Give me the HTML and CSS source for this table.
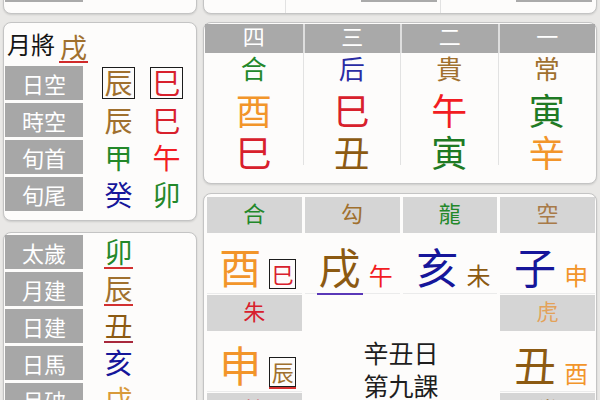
FILE: index.html
```html
<!DOCTYPE html>
<html lang="zh-Hant">
<head>
<meta charset="utf-8">
<title>六壬</title>
<link rel="stylesheet" href="styles.css">
</head>
<body>
<div class="page">
  <div class="col">
    <div class="card stub"><div class="stub-bar"></div></div>

    <div class="card kong">
      <div class="mj">
        <span class="mj-label">月將</span>
        <span class="mj-val brown">戌</span>
      </div>
      <div class="row"><div class="lbl">日空</div><div class="ch c1 box brown">辰</div><div class="ch c2 box red">巳</div></div>
      <div class="row"><div class="lbl">時空</div><div class="ch c1 brown">辰</div><div class="ch c2 red">巳</div></div>
      <div class="row"><div class="lbl">旬首</div><div class="ch c1 green">甲</div><div class="ch c2 bred">午</div></div>
      <div class="row"><div class="lbl">旬尾</div><div class="ch c1 navy">癸</div><div class="ch c2 green">卯</div></div>
    </div>

    <div class="card jian">
      <div class="row"><div class="lbl">太歲</div><div class="ch c1"><span class="green ul-red">卯</span></div></div>
      <div class="row"><div class="lbl">月建</div><div class="ch c1"><span class="brown ul-red">辰</span></div></div>
      <div class="row"><div class="lbl">日建</div><div class="ch c1"><span class="dbrown ul-dred">丑</span></div></div>
      <div class="row"><div class="lbl">日馬</div><div class="ch c1"><span class="navy">亥</span></div></div>
      <div class="row"><div class="lbl">月破</div><div class="ch c1"><span class="ochre">戌</span></div></div>
    </div>
  </div>

  <div class="col">
    <div class="card stub stub-right">
      <div class="seg"></div>
      <div class="seg"><div class="stub-bar"></div></div>
      <div class="seg"><div class="stub-bar"></div></div>
    </div>

    <div class="card ke">
      <div class="kcol">
        <div class="kh">四</div>
        <div class="kb"><div class="g green">合</div><div class="z z1 orange">酉</div><div class="z red">巳</div></div>
      </div>
      <div class="kcol">
        <div class="kh">三</div>
        <div class="kb"><div class="g blue">后</div><div class="z z1 red">巳</div><div class="z dbrown">丑</div></div>
      </div>
      <div class="kcol">
        <div class="kh">二</div>
        <div class="kb"><div class="g brown">貴</div><div class="z z1 bred">午</div><div class="z dgreen">寅</div></div>
      </div>
      <div class="kcol">
        <div class="kh">一</div>
        <div class="kb"><div class="g brown">常</div><div class="z z1 dgreen">寅</div><div class="z orange">辛</div></div>
      </div>
    </div>

    <div class="card pan">
      <div class="tile">
        <div class="th green">合</div>
        <div class="tb"><span class="big orange">酉</span><span class="sm sbox red">巳</span></div>
      </div>
      <div class="tile">
        <div class="th brown">勾</div>
        <div class="tb"><span class="big dbrown ul-purple">戌</span><span class="sm bred">午</span></div>
      </div>
      <div class="tile">
        <div class="th green">龍</div>
        <div class="tb"><span class="big navy">亥</span><span class="sm dbrown">未</span></div>
      </div>
      <div class="tile">
        <div class="th lbrown">空</div>
        <div class="tb"><span class="big navy">子</span><span class="sm orange">申</span></div>
      </div>

      <div class="tile">
        <div class="th red">朱</div>
        <div class="tb"><span class="big orange">申</span><span class="sm sbox brown sbox-ul">辰</span></div>
      </div>
      <div class="center">辛丑日<br>第九課</div>
      <div class="tile">
        <div class="th tan">虎</div>
        <div class="tb"><span class="big dbrown">丑</span><span class="sm orange">酉</span></div>
      </div>

      <div class="tile">
        <div class="th red">蛇</div>
        <div class="tb"><span class="big dbrown">未</span><span class="sm green">卯</span></div>
      </div>
      <div class="tile">
        <div class="th brown">常</div>
        <div class="tb"><span class="big dgreen">寅</span><span class="sm dbrown">戌</span></div>
      </div>
    </div>
  </div>
</div>
</body>
</html>
```

FILE: styles.css
```css
* {
  box-sizing: border-box;
  margin: 0;
  padding: 0;
}

html, body {
  width: 600px;
  height: 400px;
  overflow: hidden;
}

body {
  background: #e9e8e6;
  font-family: "Noto Sans CJK TC", "Noto Sans CJK JP", sans-serif;
  color: #111;
}

.page {
  display: grid;
  grid-template-columns: 194px 394px;
  column-gap: 6px;
  padding-left: 3px;
  margin-top: -20px;
}

.col {
  display: flex;
  flex-direction: column;
}

.card {
  background: #fdfcfb;
  border: 1px solid #c4c4c4;
  border-radius: 8px;
  box-shadow: 0 1px 2px rgba(0, 0, 0, 0.12);
}

/* colours */
.green { color: #23882a; }
.dgreen { color: #1f7a24; }
.blue { color: #2a2ca4; }
.navy { color: #16169a; }
.red { color: #d8202c; }
.bred { color: #f21c22; }
.orange { color: #f2952a; }
.brown { color: #a0702e; }
.lbrown { color: #a87a48; }
.dbrown { color: #8c5a12; }
.ochre { color: #d89a3a; }
.tan { color: #e3a25a; }

/* stubs at the top */
.stub {
  height: 34px;
  display: flex;
  align-items: flex-end;
  padding: 0 0 11px 1px;
}

.stub-bar {
  width: 78px;
  height: 20px;
  background: #aaaaaa;
}

.stub-right {
  display: grid;
  grid-template-columns: 80px 155px 1fr;
  padding: 0 1px 0 1px;
}

.stub-right .seg {
  height: 32px;
  display: flex;
  justify-content: flex-end;
  align-items: flex-end;
  padding: 0 3px 11px 0;
}

.stub-right .seg + .seg {
  border-left: 1px solid #e2e2e2;
}

.stub-right .stub-bar {
  width: 76px;
}

/* 空亡 card */
.kong {
  height: 199px;
  margin-top: 8px;
  padding-left: 1px;
}

.mj {
  height: 43px;
  display: flex;
  align-items: flex-end;
  padding: 0 0 3px 2px;
}

.mj-label {
  align-self: center;
  font-size: 24px;
  line-height: 28px;
  color: #151515;
  margin-top: 2px;
}

.mj-val {
  font-size: 27px;
  line-height: 28px;
  padding: 0 1px;
  margin-left: 4px;
  border-bottom: 2px solid #d02a2a;
}

.row {
  display: flex;
  align-items: center;
  height: 34px;
  margin-bottom: 3px;
}

.lbl {
  width: 78px;
  height: 34px;
  background: #a7a7a7;
  color: #fff;
  font-size: 22px;
  display: flex;
  align-items: center;
  justify-content: center;
}

.ch {
  width: 33px;
  height: 32px;
  font-size: 28px;
  line-height: 32px;
  text-align: center;
}

.c1 { margin-left: 19px; }
.c2 { margin-left: 15px; }

.box {
  border: 1.5px solid #1c1c1c;
  line-height: 29px;
}

/* 歲建 card */
.jian {
  height: 200px;
  margin-top: 11px;
  padding: 2px 0 0 1px;
}

.jian .ch {
  height: 34px;
  display: flex;
  justify-content: center;
}

.jian .ch span {
  width: 29px;
  line-height: 32px;
  text-align: center;
  border-bottom: 2px solid transparent;
}

.ul-red { border-bottom-color: #d23030 !important; }
.ul-dred { border-bottom-color: #a8283c !important; }

/* 四課 card */
.ke {
  height: 162px;
  margin-top: 8px;
  padding: 1px 1px 0 1px;
  display: grid;
  grid-template-columns: repeat(4, 1fr);
}

.kh {
  height: 29px;
  background: #a9a9a9;
  color: #fff;
  font-size: 22px;
  line-height: 22px;
  text-align: center;
}

.kcol + .kcol .kh {
  border-left: 2px solid #dedede;
}

.kb {
  height: 112px;
  text-align: center;
}

.kcol + .kcol .kb {
  border-left: 1px solid #e2e2e2;
}

.kb .g {
  font-size: 26px;
  line-height: 30px;
}

.kb .z {
  font-size: 36px;
  line-height: 42px;
}

.kb .z1 {
  margin-top: 5px;
}

/* 天地盤 card */
.pan {
  height: 260px;
  margin-top: 9px;
  padding: 3px 1px 0 3px;
  display: grid;
  grid-template-columns: repeat(4, 1fr);
  grid-auto-rows: auto;
  gap: 1px 3px;
  align-content: start;
}

.tile {
  display: flex;
  flex-direction: column;
}

.th {
  height: 36px;
  background: #d5d5d5;
  font-size: 22px;
  line-height: 30px;
  text-align: center;
}

.tb {
  height: 61px;
  display: flex;
  align-items: flex-end;
  justify-content: center;
  gap: 8px;
  padding: 0 0 4px 7px;
  border-bottom: 1px solid #ebebeb;
}

.big {
  font-size: 42px;
  line-height: 46px;
}

.sm {
  font-size: 24px;
  line-height: 28px;
}

.sbox {
  width: 27px;
  height: 30px;
  font-size: 22px;
  line-height: 27px;
  text-align: center;
  border: 1.5px solid #1c1c1c;
}

.sbox-ul {
  box-shadow: 0 2px 0 #d43030;
}

.ul-purple {
  padding: 0 2px 4px;
  margin: 0 -2px -6px;
  border-bottom: 2px solid #5a38b8;
}

.center {
  grid-column: 2 / span 2;
  grid-row: 2 / span 2;
  padding-top: 41px;
  font-size: 25px;
  line-height: 33px;
  text-align: center;
  color: #1e1e1e;
}
```
